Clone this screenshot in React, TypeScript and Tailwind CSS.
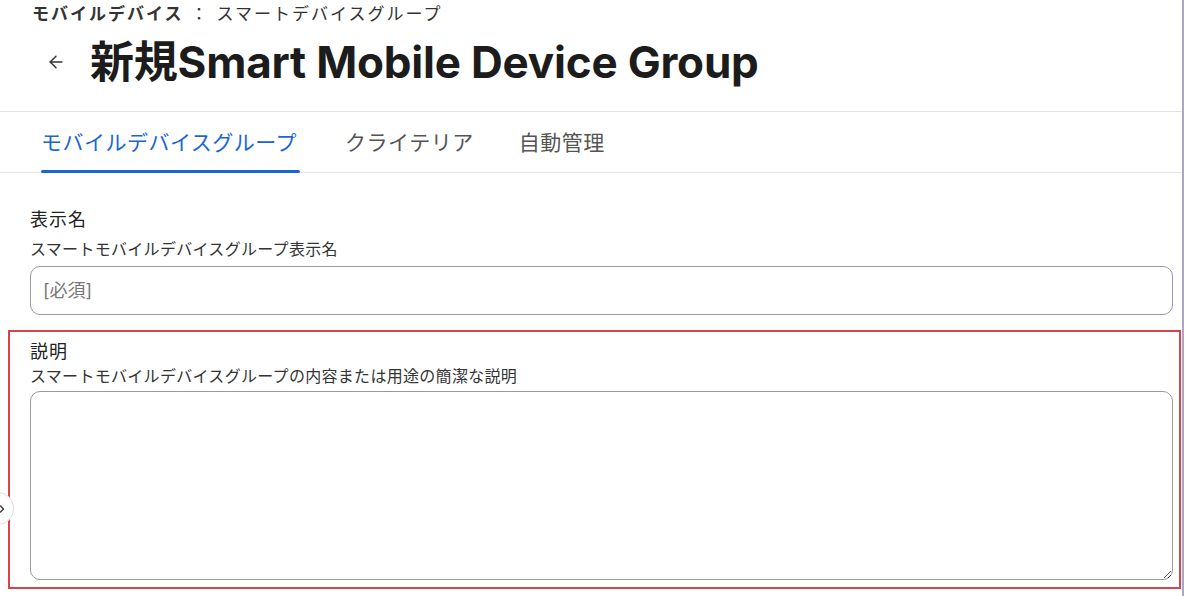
import { ArrowLeft, ChevronRight } from "lucide-react";

const font = { fontFamily: '"Inter", "Noto Sans CJK JP", sans-serif' };

export default function App() {
  return (
    <div className="relative w-[1186px] h-[596px] overflow-hidden bg-white text-[#222]" style={font}>
      <div className="flex h-full">
        <div className="w-[1182px] flex flex-col">
          {/* header */}
          <div className="h-[112px] border-b border-[#e3e3e3] pl-[32px]">
            <div className="pt-[3px] text-[17px] leading-[22px] tracking-[2px] text-[#333]">
              <span className="font-semibold">モバイルデバイス</span>
              <span className="mx-[7px]">：</span>
              <span>スマートデバイスグループ</span>
            </div>
            <div className="flex items-center mt-[9px]">
              <ArrowLeft className="w-[20px] h-[20px] ml-[14px] text-[#333]" strokeWidth={1.75} />
              <h1 className="ml-[24px] text-[44px] leading-[56px] font-bold text-[#1c1c1c] tracking-[-0.2px]">
                新規Smart Mobile Device Group
              </h1>
            </div>
          </div>

          {/* tabs */}
          <div className="h-[61px] border-b border-[#e3e3e3] flex pl-[41px] text-[21px] tracking-[0.5px]">
            <div className="flex flex-col justify-center relative">
              <span className="text-[#1a66d6] pt-[1px]">モバイルデバイスグループ</span>
              <div className="absolute left-0 right-[-3px] bottom-[-1px] h-[3px] bg-[#1a66d6] rounded-sm" />
            </div>
            <div className="flex items-center text-[#555] pt-[1px] ml-[48px]">クライテリア</div>
            <div className="flex items-center text-[#555] pt-[1px] ml-[45px]">自動管理</div>
          </div>

          {/* form */}
          <div className="pt-[34px] pl-[30px] pr-[9px]">
            <div className="text-[18px] leading-[26px] tracking-[1px]">表示名</div>
            <div className="text-[16px] leading-[20px] tracking-[0.3px] mt-[6px] text-[#333]">スマートモバイルデバイスグループ表示名</div>
            <div className="mt-[7px] h-[49px] border border-[#9a9a9a] rounded-[10px] flex items-center px-[12px] text-[18px] text-[#777]">
              [必須]
            </div>
          </div>
          <div className="mt-[15px] ml-[8px] mr-[1px] h-[259px] border-2 border-[#d9444c] pl-[20px] pr-[6px] pt-[7px]">
            <div className="text-[18px] leading-[26px] tracking-[1px]">説明</div>
            <div className="text-[16px] leading-[20px] tracking-[0.3px] mt-[1px] text-[#333]">スマートモバイルデバイスグループの内容または用途の簡潔な説明</div>
            <textarea
              className="mt-[5px] block w-full h-[189px] border border-[#9a9a9a] rounded-[10px] outline-none resize-y"
            />
          </div>
        </div>
        <div className="w-[2px] h-full bg-[#aaa6c9]" />
      </div>

      {/* collapsed side toggle */}
      <div className="absolute left-[-18px] top-[492px] w-[32px] h-[33px] rounded-full border border-[#ddd] bg-white" />
      <ChevronRight className="absolute left-[-4px] top-[503px] w-[12px] h-[12px] text-[#333]" strokeWidth={2.5} />
    </div>
  );
}
